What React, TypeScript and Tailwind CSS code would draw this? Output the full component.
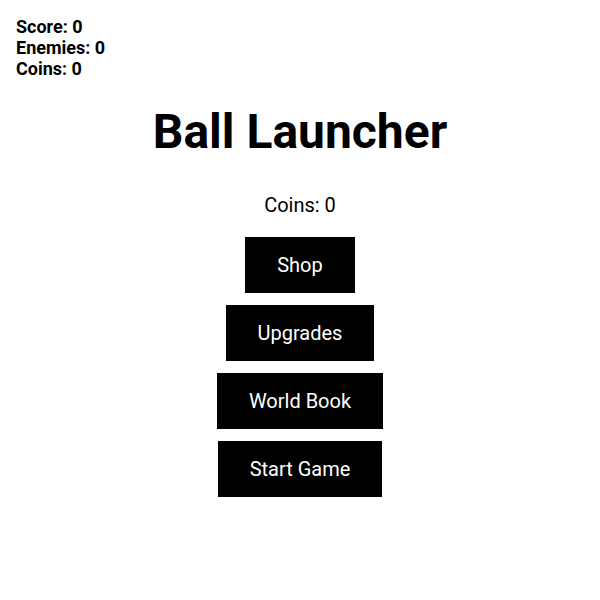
import type { ReactNode } from "react";

function MenuButton({ children }: { children: ReactNode }) {
  return (
    <button
      type="button"
      className="bg-black px-8 py-4 text-[20px] leading-6 text-white"
    >
      {children}
    </button>
  );
}

export default function App() {
  return (
    <div className="relative min-h-[600px] w-full bg-white font-['Roboto',sans-serif] text-black">
      <div className="absolute left-4 top-4 flex flex-col text-[18px] font-bold leading-[21px]">
        <span>Score: 0</span>
        <span>Enemies: 0</span>
        <span>Coins: 0</span>
      </div>

      <div className="flex flex-col items-center pt-[104px]">
        <h1 className="text-[48px] font-bold leading-[56px]">Ball Launcher</h1>
        <p className="mt-[34px] text-[20px] leading-[23px]">Coins: 0</p>
        <div className="mt-5 flex flex-col items-center gap-3">
          <MenuButton>Shop</MenuButton>
          <MenuButton>Upgrades</MenuButton>
          <MenuButton>World Book</MenuButton>
          <MenuButton>Start Game</MenuButton>
        </div>
      </div>
    </div>
  );
}
